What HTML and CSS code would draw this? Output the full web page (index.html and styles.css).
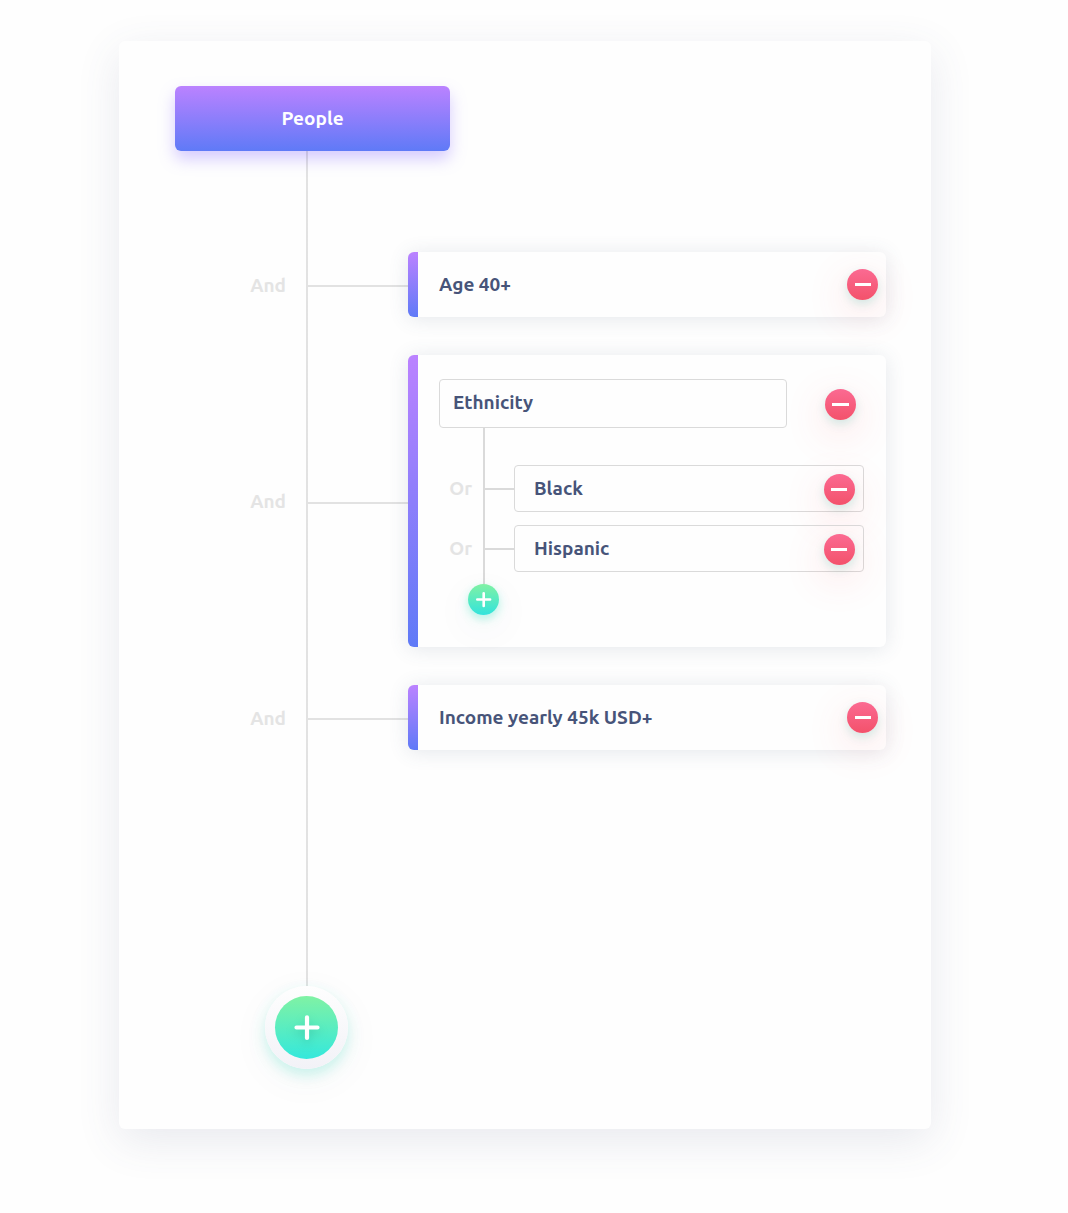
FILE: index.html
```html
<!DOCTYPE html>
<html lang="en">
<head>
  <meta charset="utf-8">
  <meta name="viewport" content="width=device-width, initial-scale=1">
  <title>People</title>
  <link rel="stylesheet" href="styles.css">
</head>
<body>
  <main class="panel">
    <h1 class="root">People</h1>

    <ul class="tree">
      <li class="branch">
        <span class="operator">And</span>
        <span class="connector"></span>
        <div class="card card-single">
          <span class="card-text">Age 40+</span>
          <button class="round remove" type="button" aria-label="Remove age">
            <svg width="31" height="31" viewBox="0 0 31 31"><path d="M8 15.5h16" stroke="#fff" stroke-width="3"/></svg>
          </button>
        </div>
      </li>

      <li class="branch">
        <span class="operator">And</span>
        <span class="connector"></span>
        <div class="card card-group">
          <div class="group-head">
            <input class="field" type="text" value="Ethnicity" aria-label="Attribute">
            <button class="round remove" type="button" aria-label="Remove ethnicity">
              <svg width="31" height="31" viewBox="0 0 31 31"><path d="M7 15.5h17" stroke="#fff" stroke-width="3"/></svg>
            </button>
          </div>
          <ul class="subtree">
            <li class="sub-branch">
              <span class="operator sub-operator">Or</span>
              <span class="connector"></span>
              <div class="option">
                <input class="option-input" type="text" value="Black" aria-label="First value">
                <button class="round remove" type="button" aria-label="Remove first value">
                  <svg width="31" height="31" viewBox="0 0 31 31"><path d="M7 15.5h16" stroke="#fff" stroke-width="3"/></svg>
                </button>
              </div>
            </li>
            <li class="sub-branch">
              <span class="operator sub-operator">Or</span>
              <span class="connector"></span>
              <div class="option">
                <input class="option-input" type="text" value="Hispanic" aria-label="Second value">
                <button class="round remove" type="button" aria-label="Remove second value">
                  <svg width="31" height="31" viewBox="0 0 31 31"><path d="M7 15.5h16" stroke="#fff" stroke-width="3"/></svg>
                </button>
              </div>
            </li>
          </ul>
          <button class="round add" type="button" aria-label="Add value">
            <svg width="31" height="31" viewBox="0 0 31 31"><path d="M9.3 15.5h12.8M15.7 9.3v12.6" stroke="#fff" stroke-width="2.6" stroke-linecap="round"/></svg>
          </button>
        </div>
      </li>

      <li class="branch">
        <span class="operator">And</span>
        <span class="connector"></span>
        <div class="card card-single">
          <span class="card-text">Income yearly 45k USD+</span>
          <button class="round remove" type="button" aria-label="Remove income">
            <svg width="31" height="31" viewBox="0 0 31 31"><path d="M8 15.5h16" stroke="#fff" stroke-width="3"/></svg>
          </button>
        </div>
      </li>
    </ul>

    <button class="add-condition" type="button" aria-label="Add condition">
      <span class="add-disc">
        <svg class="plus" width="63" height="63" viewBox="0 0 63 63"><path d="M21.5 31.5h21M32 21.3v20.6" stroke="#fff" stroke-width="4.2" stroke-linecap="round"/></svg>
      </span>
    </button>
  </main>
</body>
</html>
```
FILE: styles.css
```css
* {
  box-sizing: border-box;
}

body {
  margin: 0;
  padding: 41px 137px 84px 119px;
  background: #fefefe;
  color: #475479;
  font-family: Ubuntu, "Noto Sans", "Open Sans", sans-serif;
  font-size: 19px;
  font-weight: 600;
  line-height: 24px;
}

ul {
  list-style: none;
  margin: 0;
}

button {
  border: 0;
  padding: 0;
  cursor: pointer;
}

svg {
  display: block;
}

.panel {
  padding: 45px 45px 60px 56px;
  border-radius: 6px;
  background: #fefefe;
  box-shadow: 0 12px 44px rgba(70, 85, 120, 0.12);
}

.root {
  display: flex;
  align-items: center;
  justify-content: center;
  max-width: 275px;
  height: 65px;
  margin: 0;
  padding-bottom: 2px;
  border-radius: 6px;
  background: linear-gradient(#bb82ff, #5f7af7);
  box-shadow: 0 8px 16px rgba(140, 110, 255, 0.36);
  color: #fff;
  font-size: 19px;
  font-weight: 600;
}

/* The vertical trunk is drawn behind the branches, at the end of the operator column. */
.tree {
  display: grid;
  gap: 38px;
  padding: 101px 0 236px;
  background: linear-gradient(rgba(0, 0, 0, 0.11), rgba(0, 0, 0, 0.11)) 131px 0 / 2px 100% no-repeat;
}

.branch {
  display: grid;
  grid-template-columns: 131px 102px minmax(0, 1fr);
  align-items: center;
}

.operator {
  padding-right: 20px;
  color: #e4e4e4;
  text-align: right;
}

.connector {
  height: 2px;
  margin-top: 3px;
  margin-left: 2px;
  background: #e2e2e2;
}

.card {
  border-radius: 6px;
  background: linear-gradient(#bb82ff, #5f7af7) 0 0 / 10px 100% no-repeat, #fefefe;
  box-shadow: 0 2px 20px rgba(70, 90, 120, 0.14);
}

.card-single {
  display: flex;
  align-items: center;
  justify-content: space-between;
  min-height: 65px;
  padding: 0 8px 0 31px;
}

.card-text {
  padding-bottom: 2px;
}

.card-group {
  padding: 24px 22px 32px 31px;
}

.group-head {
  display: flex;
  align-items: center;
  gap: 38px;
  padding-right: 8px;
}

.field,
.option-input {
  flex: 1;
  min-width: 0;
  color: inherit;
  font: inherit;
  background: transparent;
}

.field {
  height: 49px;
  padding: 0 13px 3px;
  border: 1px solid #dadada;
  border-radius: 4px;
}

.subtree {
  display: grid;
  gap: 13px;
  padding: 37px 0 12px;
  background: linear-gradient(#dadada, #dadada) 44px 0 / 2px 100% no-repeat;
}

.sub-branch {
  display: grid;
  grid-template-columns: 44px 31px minmax(0, 1fr);
  align-items: center;
}

.sub-operator {
  padding-right: 11px;
  padding-bottom: 1px;
}

.sub-branch .connector {
  margin-top: 1px;
  background: #dadada;
}

.option {
  display: flex;
  align-items: center;
  height: 47px;
  padding-right: 8px;
  border: 1px solid #dadada;
  border-radius: 4px;
}

.option-input {
  height: 45px;
  padding: 0 19px 1px;
  border: 0;
}

.round {
  flex: none;
  display: block;
  width: 31px;
  height: 31px;
  border-radius: 50%;
}

.remove {
  background: linear-gradient(#fb6a92, #f3526b);
  box-shadow: 0 4px 10px rgba(60, 190, 170, 0.22), 0 12px 40px rgba(255, 80, 90, 0.22);
}

.card-group .remove {
  margin-top: 2px;
}

.add {
  margin-left: 29px;
  background: linear-gradient(#80f2a4, #32e3dc);
  box-shadow: 0 4px 10px rgba(50, 225, 190, 0.35), 0 12px 40px rgba(70, 90, 120, 0.07);
}

.add-condition {
  display: block;
  margin-left: 90px;
  padding: 10px;
  border-radius: 50%;
  background: linear-gradient(#fefefe, #f2f2f7);
  box-shadow: 0 6px 14px rgba(50, 225, 190, 0.25), 0 10px 40px rgba(70, 90, 120, 0.05);
}

.add-disc {
  display: block;
  border-radius: 50%;
  background: linear-gradient(#80f2a4, #34e8dc);
}

.plus {
  filter: drop-shadow(0 4px 4px rgba(20, 150, 130, 0.3));
}
```
